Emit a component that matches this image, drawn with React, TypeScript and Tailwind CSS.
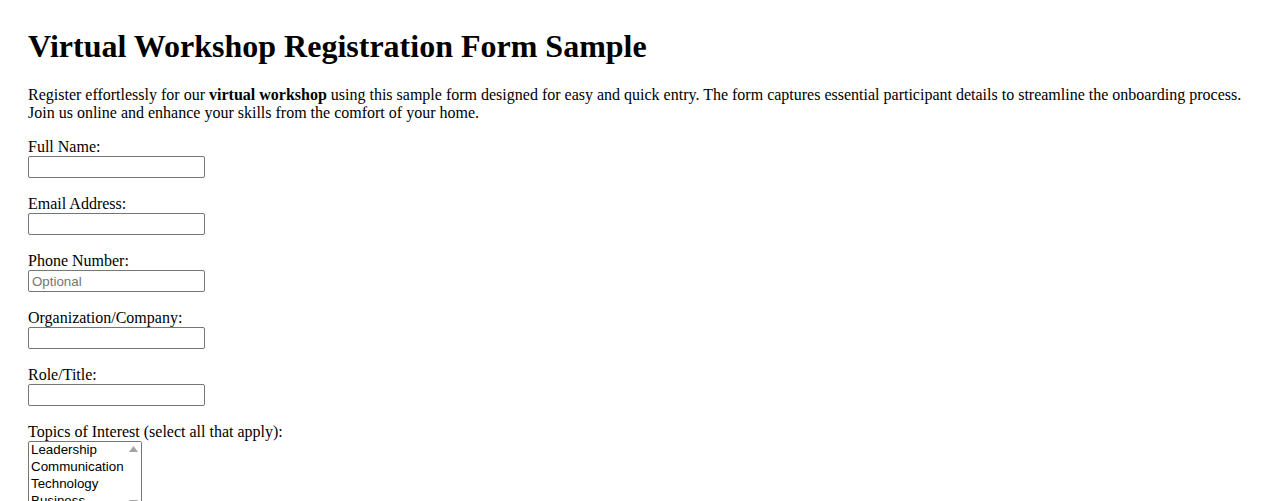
const FIELDS: Array<{ id: string; label: string; placeholder?: string }> = [
  { id: "fullName", label: "Full Name:" },
  { id: "email", label: "Email Address:" },
  { id: "phone", label: "Phone Number:", placeholder: "Optional" },
  { id: "organization", label: "Organization/Company:" },
  { id: "role", label: "Role/Title:" },
];

const TOPICS = ["Leadership", "Communication", "Technology", "Business", "Marketing", "Design"];

export default function App() {
  return (
    <div className="min-h-screen bg-white px-[28px] pt-[28px] text-black font-['Liberation_Serif',serif]">
      <h1 className="text-[32px] font-bold leading-[37px] mb-[21px]">
        Virtual Workshop Registration Form Sample
      </h1>
      <p className="text-[16px] leading-[18px] mb-[16px]">
        Register effortlessly for our <strong>virtual workshop</strong> using this sample form
        designed for easy and quick entry. The form captures essential participant details to
        streamline the onboarding process. Join us online and enhance your skills from the comfort
        of your home.
      </p>

      <form className="text-[16px]">
        {FIELDS.map((f) => (
          <div key={f.id} className="mb-[17px]">
            <label htmlFor={f.id} className="block leading-[18px]">
              {f.label}
            </label>
            <input
              id={f.id}
              type="text"
              placeholder={f.placeholder}
              className="block w-[177px] h-[22px] border border-[#767676] rounded-[2px] px-[3px] text-[13.33px] font-['Liberation_Sans',Arial,sans-serif] placeholder:text-[#757575] outline-none"
            />
          </div>
        ))}

        <div>
          <label className="block leading-[18px]">Topics of Interest (select all that apply):</label>
          <TopicList />
        </div>
      </form>
    </div>
  );
}

function TopicList() {
  return (
    <div className="flex w-[114px] h-[70px] border border-[#767676] rounded-[2px] overflow-hidden font-['Liberation_Sans',Arial,sans-serif] text-[13.33px]">
      <ul className="flex-1 pl-[2px] -mt-px overflow-hidden">
        {TOPICS.map((t) => (
          <li key={t} className="leading-[17px] whitespace-nowrap">
            {t}
          </li>
        ))}
      </ul>
      <div className="w-[15px] flex flex-col justify-between items-center py-[4px] bg-white">
        <svg width="9" height="6" viewBox="0 0 9 6">
          <path d="M0 6 L4.5 0 L9 6 Z" fill="#a3a3a3" />
        </svg>
        <svg width="9" height="6" viewBox="0 0 9 6">
          <path d="M0 0 L4.5 6 L9 0 Z" fill="#a3a3a3" />
        </svg>
      </div>
    </div>
  );
}
